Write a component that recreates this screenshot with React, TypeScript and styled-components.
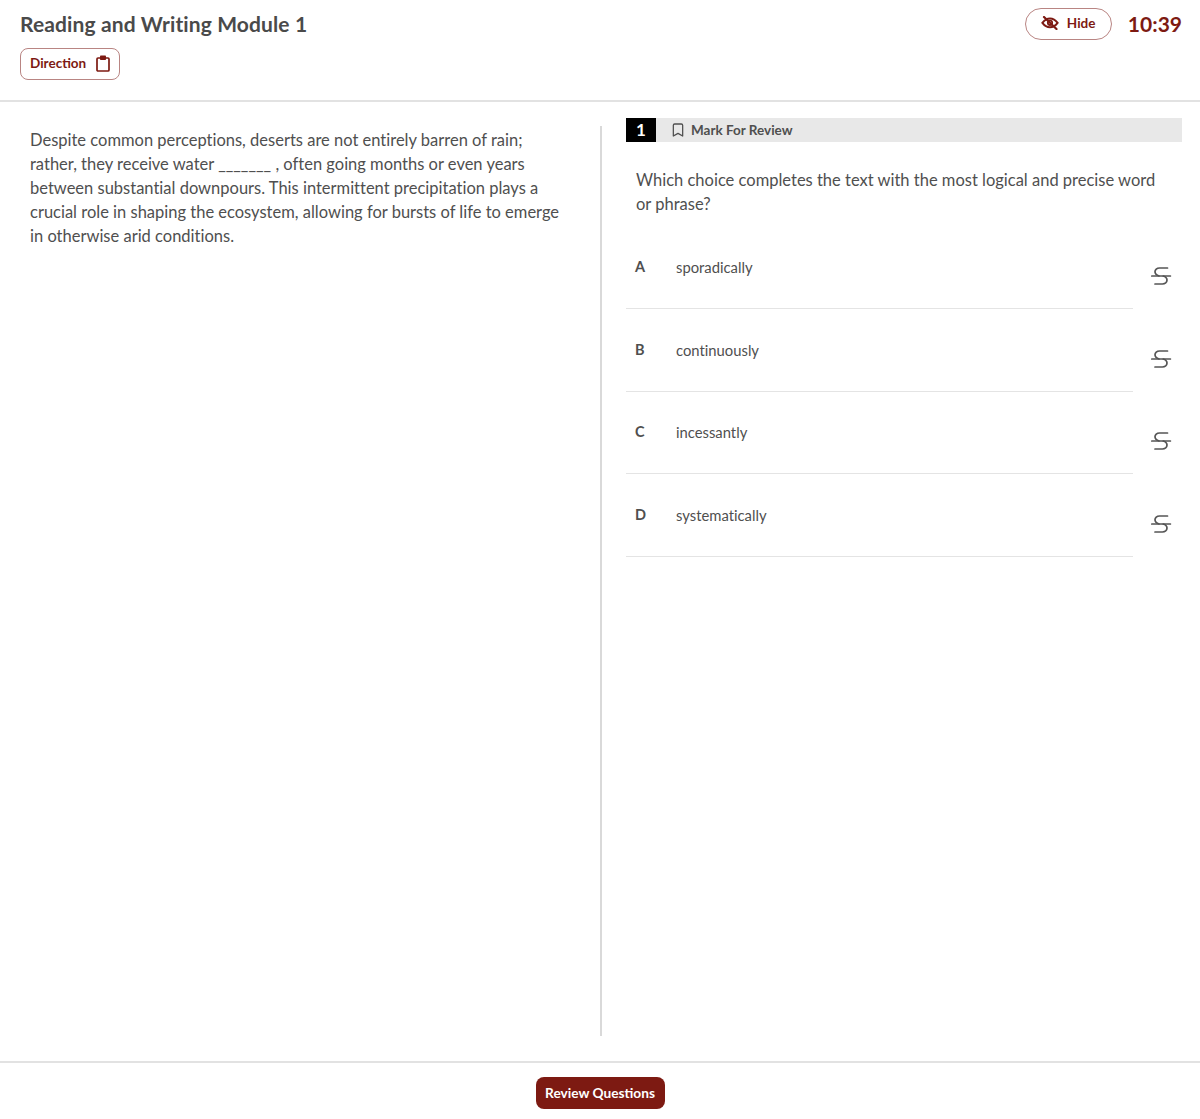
import React from "react";
import styled, { createGlobalStyle } from "styled-components";
import { Bookmark } from "lucide-react";

const Global = createGlobalStyle`
  html, body { margin: 0; padding: 0; background: #fff; }
  body { font-family: "Lato", "Open Sans", sans-serif; color: #4a4a4a; font-variant-ligatures: none; }
`;
const Page = styled.div`
  width: 1200px; height: 1119px; display: flex; flex-direction: column; background: #fff; overflow: hidden;
`;
const Header = styled.header`
  flex: none; box-sizing: border-box; padding: 8px 18px 0 20px; height: 102px;
  display: flex; justify-content: space-between; align-items: flex-start;
  border-bottom: 2px solid #e2e2e2;
`;
const HeaderLeft = styled.div`display: flex; flex-direction: column; align-items: flex-start; gap: 9px;`;
const Title = styled.h1`margin: 0; font-size: 21px; line-height: 31px; font-weight: 700; color: #4a4a4a; letter-spacing: .12px;`;
const OutlineButton = styled.button`
  display: inline-flex; align-items: center; box-sizing: border-box; background: #fff;
  border: 1px solid #b98583; color: #7d1a12; font-family: inherit; font-weight: 700; font-size: 13.5px; padding: 0 0 2px;
`;
const DirectionButton = styled(OutlineButton)`height: 32px; width: 100px; border-radius: 8px; padding-left: 9px; gap: 10px;`;
const HideButton = styled(OutlineButton)`height: 32px; width: 87px; border-radius: 16px; padding-left: 15px; gap: 8px;`;
const HeaderRight = styled.div`display: flex; align-items: center; gap: 16px;`;
const Clock = styled.div`font-size: 21px; line-height: 32px; font-weight: 700; color: #7d1a12;`;
const Main = styled.main`flex: 1; display: grid; grid-template-columns: 602px 1fr; padding-top: 24px; min-height: 0;`;
const Passage = styled.section`
  height: 910px; border-right: 2px solid #d9d9d9; box-sizing: border-box; padding: 2px 36px 0 30px;
`;
const PassageText = styled.p`margin: 0; font-size: 16.5px; line-height: 24px; color: #4f4f4f;`;
const Question = styled.section`padding: 0 18px 0 24px; margin-top: -8px; display: flex; flex-direction: column;`;
const QuestionBar = styled.div`height: 24px; background: #e8e8e8; display: flex; align-items: center;`;
const Num = styled.div`
  width: 30px; height: 24px; background: #000; color: #fff; font-weight: 700; font-size: 17px; padding-bottom: 2px; box-sizing: border-box;
  display: flex; align-items: center; justify-content: center;
`;
const Mark = styled.div`display: flex; align-items: center; gap: 5px; margin-left: 14px; padding-bottom: 1px; font-size: 13.5px; font-weight: 700; color: #4f4f4f;`;
const Prompt = styled.p`margin: 26px 0 36px; padding: 0 10px; font-size: 16.5px; line-height: 24px; color: #4f4f4f;`;
const Choices = styled.div`display: flex; flex-direction: column;`;
const ChoiceRow = styled.div`display: grid; grid-template-columns: 507px 1fr; height: 82.7px;`;
const ChoiceBody = styled.div`
  display: flex; align-items: flex-start; padding-top: 5px; border-bottom: 1px solid #e4e4e4; box-sizing: border-box;
  height: 57px;
`;
const Letter = styled.span`width: 50px; padding-left: 9px; box-sizing: border-box; font-size: 14.5px; line-height: 20px; font-weight: 700; color: #4f4f4f;`;
const ChoiceText = styled.span`font-size: 14.8px; line-height: 20px; color: #4f4f4f;`;
const Strike = styled.div`display: flex; justify-content: flex-start; padding: 12px 0 0 16px; color: #555;`;
const Footer = styled.footer`
  height: 58px; flex: none; border-top: 2px solid #e2e2e2; display: flex; justify-content: center; padding-top: 14px; box-sizing: border-box;
`;
const Review = styled.button`
  width: 129px; height: 32px; background: #7d1a12; color: #fff; border: 0; border-radius: 8px; padding: 0 0 2px;
  font-family: inherit; font-weight: 700; font-size: 13.7px;
`;
const StrikeIcon = () => (
  <svg width="24" height="24" viewBox="0 0 24 24" fill="none" stroke="currentColor" strokeWidth="1.7" strokeLinecap="round" strokeLinejoin="round">
    <path d="M18.5 4H10.5C7.8 4 6 5.8 6 7.8c0 2 1.6 3.4 4 4.2" />
    <path d="M14.2 12c2.4.8 3.8 2.2 3.8 4.1 0 2.3-2 3.9-4.6 3.9H6" />
    <path d="M2.8 12h18.6" />
  </svg>
);
const ClipIcon = () => (
  <svg width="14" height="17" viewBox="0 0 14 17">
    <rect x="1" y="3" width="12" height="13" rx="1" fill="none" stroke="currentColor" strokeWidth="1.7" />
    <rect x="4" y="0.5" width="6" height="4.5" rx="0.8" fill="currentColor" />
  </svg>
);
const EyeSlashIcon = () => (
  <svg width="18" height="14" viewBox="0 0 18 14" fill="none" stroke="currentColor" strokeLinecap="round">
    <path d="M1.4 6.8C3.6 3.8 6.2 2.4 9 2.4s5.4 1.4 7.6 4.4c-2.2 3-4.8 4.4-7.6 4.4S3.6 9.8 1.4 6.8Z" strokeWidth="2" />
    <circle cx="9" cy="6.8" r="2.2" strokeWidth="1.8" />
    <path d="M3 1l12.5 12" strokeWidth="2.2" />
  </svg>
);
const choices = [["A","sporadically"],["B","continuously"],["C","incessantly"],["D","systematically"]];
export default function App() {
  return (
    <Page>
      <Global />
      <Header>
        <HeaderLeft>
          <Title>Reading and Writing Module 1</Title>
          <DirectionButton>Direction <ClipIcon /></DirectionButton>
        </HeaderLeft>
        <HeaderRight>
          <HideButton><EyeSlashIcon /> Hide</HideButton>
          <Clock>10:39</Clock>
        </HeaderRight>
      </Header>
      <Main>
        <Passage>
          <PassageText>
            Despite common perceptions, deserts are not entirely barren of rain; rather, they receive water _______ , often going months or even years between substantial downpours. This intermittent precipitation plays a crucial role in shaping the ecosystem, allowing for bursts of life to emerge in otherwise arid conditions.
          </PassageText>
        </Passage>
        <Question>
          <QuestionBar>
            <Num>1</Num>
            <Mark><Bookmark size={16} strokeWidth={1.9} />Mark For Review</Mark>
          </QuestionBar>
          <Prompt>Which choice completes the text with the most logical and precise word or phrase?</Prompt>
          <Choices>
            {choices.map(([l, t]) => (
              <ChoiceRow key={l}>
                <ChoiceBody><Letter>{l}</Letter><ChoiceText>{t}</ChoiceText></ChoiceBody>
                <Strike><StrikeIcon /></Strike>
              </ChoiceRow>
            ))}
          </Choices>
        </Question>
      </Main>
      <Footer><Review>Review Questions</Review></Footer>
    </Page>
  );
}
